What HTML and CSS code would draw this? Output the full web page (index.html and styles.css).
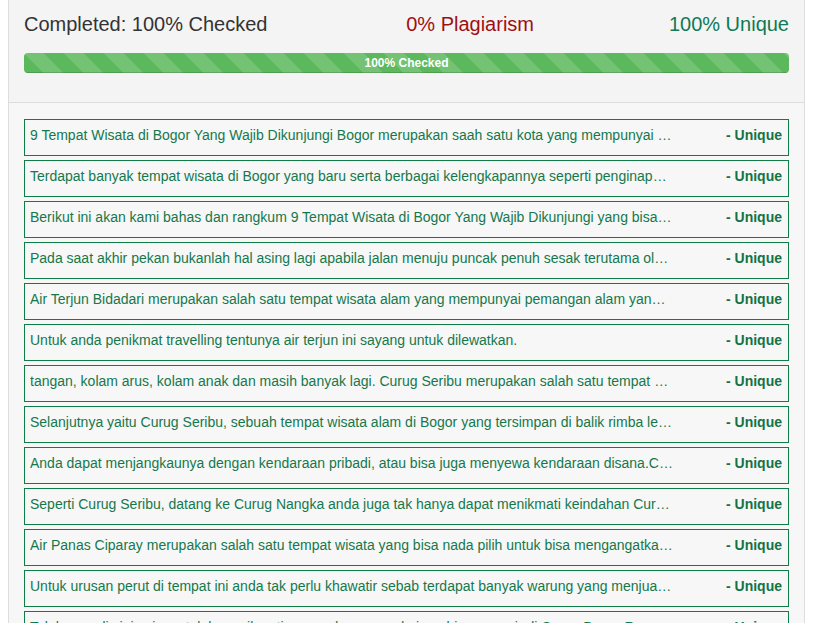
FILE: index.html
```html
<!DOCTYPE html>
<html>
<head>
<meta charset="utf-8">
<link rel="stylesheet" href="styles.css">
</head>
<body>
<div class="panel">
  <div class="panel-head">
    <div class="stats">
      <div class="stat stat-done">Completed: 100% Checked</div>
      <div class="stat stat-plag">0% Plagiarism</div>
      <div class="stat stat-uniq">100% Unique</div>
    </div>
    <div class="progress">
      <div class="progress-bar">100% Checked</div>
    </div>
  </div>
  <div class="panel-body">
    <div class="row"><span class="txt">9 Tempat Wisata di Bogor Yang Wajib Dikunjungi Bogor merupakan saah satu kota yang mempunyai banyak tempat wisata</span><span class="res">- Unique</span></div>
    <div class="row"><span class="txt">Terdapat banyak tempat wisata di Bogor yang baru serta berbagai kelengkapannya seperti penginapan dan restoran</span><span class="res">- Unique</span></div>
    <div class="row"><span class="txt">Berikut ini akan kami bahas dan rangkum 9 Tempat Wisata di Bogor Yang Wajib Dikunjungi yang bisa anda kunjungi</span><span class="res">- Unique</span></div>
    <div class="row"><span class="txt">Pada saat akhir pekan bukanlah hal asing lagi apabila jalan menuju puncak penuh sesak terutama oleh kendaraan</span><span class="res">- Unique</span></div>
    <div class="row"><span class="txt">Air Terjun Bidadari merupakan salah satu tempat wisata alam yang mempunyai pemangan alam yang indah</span><span class="res">- Unique</span></div>
    <div class="row"><span class="txt">Untuk anda penikmat travelling tentunya air terjun ini sayang untuk dilewatkan.</span><span class="res">- Unique</span></div>
    <div class="row"><span class="txt">tangan, kolam arus, kolam anak dan masih banyak lagi. Curug Seribu merupakan salah satu tempat wisata</span><span class="res">- Unique</span></div>
    <div class="row"><span class="txt">Selanjutnya yaitu Curug Seribu, sebuah tempat wisata alam di Bogor yang tersimpan di balik rimba lebat</span><span class="res">- Unique</span></div>
    <div class="row"><span class="txt">Anda dapat menjangkaunya dengan kendaraan pribadi, atau bisa juga menyewa kendaraan disana.Curug ini</span><span class="res">- Unique</span></div>
    <div class="row"><span class="txt">Seperti Curug Seribu, datang ke Curug Nangka anda juga tak hanya dapat menikmati keindahan Curug saja</span><span class="res">- Unique</span></div>
    <div class="row"><span class="txt">Air Panas Ciparay merupakan salah satu tempat wisata yang bisa nada pilih untuk bisa mengangatkan badan</span><span class="res">- Unique</span></div>
    <div class="row"><span class="txt">Untuk urusan perut di tempat ini anda tak perlu khawatir sebab terdapat banyak warung yang menjual makanan</span><span class="res">- Unique</span></div>
    <div class="row"><span class="txt">Tak hanya di sini saja, setelah menikmati pemandangan anda juga bisa mampir di Curug Bogor Rusa Kuning</span><span class="res">- Unique</span></div>
  </div>
</div>
</body>
</html>
```
FILE: styles.css
```css
html, body {
  background: #ffffff;
}
body {
  margin: 0 8px;
  font-family: "Liberation Sans", Arial, sans-serif;
  overflow: hidden;
  height: 623px;
}
.panel {
  border-left: 1px solid #dddddd;
  border-right: 1px solid #dddddd;
  background: #f7f7f7;
  min-height: 623px;
}
.panel-head {
  background: #f4f4f4;
  border-bottom: 1px solid #dddddd;
  padding: 13px 15px 29px;
}
.stats {
  display: grid;
  grid-template-columns: 1fr 1fr 1fr;
  font-size: 20px;
  line-height: 22px;
}
.stat-done { color: #333333; text-align: left; }
.stat-plag { color: #a10e12; text-align: right; }
.stat-uniq { color: #0f7a55; text-align: right; }
.progress {
  margin-top: 18px;
  height: 20px;
  border-radius: 4px;
  background: #f5f5f5;
  overflow: hidden;
}
.progress-bar {
  height: 20px;
  width: 100%;
  background-color: #5cb85c;
  background-image: linear-gradient(45deg, rgba(255,255,255,.15) 25%, transparent 25%, transparent 50%, rgba(255,255,255,.15) 50%, rgba(255,255,255,.15) 75%, transparent 75%, transparent);
  background-size: 40px 40px;
  box-shadow: inset 0 -1px 0 rgba(0,0,0,.15);
  color: #ffffff;
  font-size: 12px;
  font-weight: bold;
  line-height: 20px;
  text-align: center;
}
.panel-body {
  padding: 16px 15px 0;
  display: flex;
  flex-direction: column;
  gap: 4px;
}
.row {
  display: flex;
  justify-content: space-between;
  align-items: flex-start;
  border: 1px solid #0f7d47;
  background: #f7f7f7;
  padding: 5px 6px 10px 5px;
  font-size: 14px;
  line-height: 20px;
  color: #15784c;
}
.txt {
  flex: 0 0 643px;
  white-space: nowrap;
  overflow: hidden;
  text-overflow: ellipsis;
}
.res {
  flex: 0 0 auto;
  font-weight: bold;
  color: #137346;
  white-space: nowrap;
}
```
